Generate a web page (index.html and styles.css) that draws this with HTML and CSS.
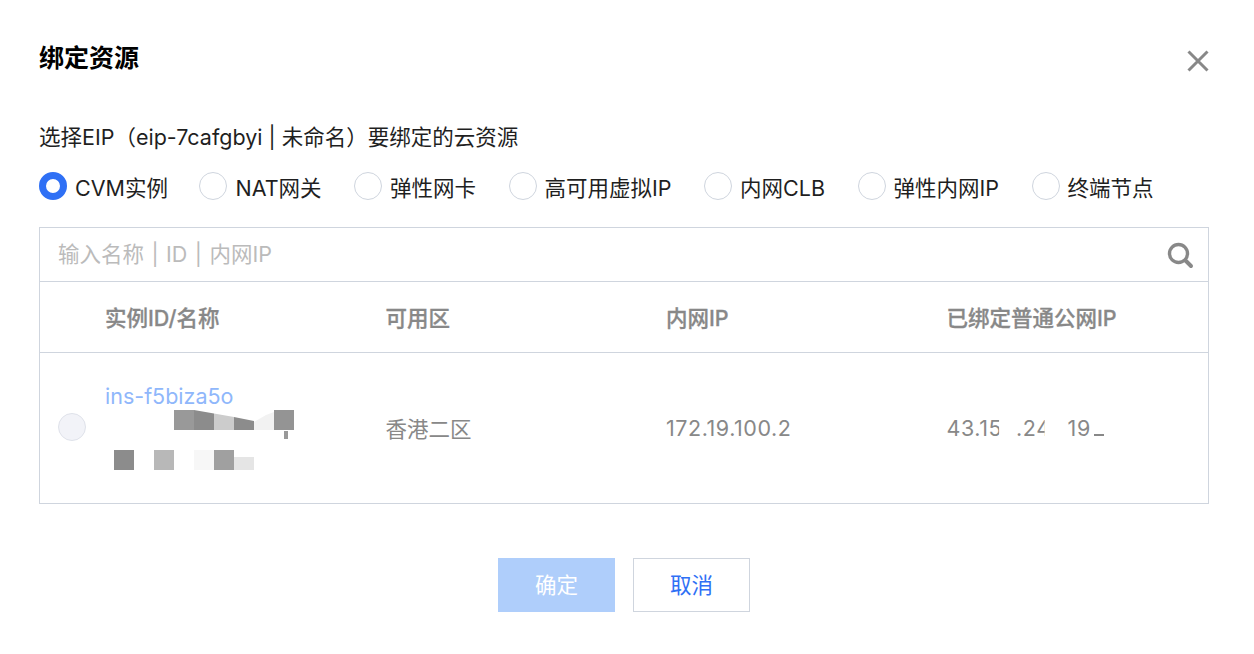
FILE: index.html
```html
<!DOCTYPE html>
<html lang="zh-CN">
<head>
    <meta charset="utf-8">
    <title>绑定资源</title>
    <link rel="stylesheet" href="styles.css">
</head>

<body>
    <div class="dialog">
        <header class="dialog-head">
            <h1>绑定资源</h1>
            <svg class="close" width="24" height="24" viewBox="0 0 24 24">
                <path d="M2.5 2.5 L21.5 21.5 M21.5 2.5 L2.5 21.5" stroke="#888" stroke-width="3" fill="none"/>
            </svg>
        </header>

        <p class="hint">选择EIP（eip-7cafgbyi | 未命名）要绑定的云资源</p>

        <div class="radios">
            <label class="radio"><i class="dot checked"></i>CVM实例</label>
            <label class="radio"><i class="dot"></i>NAT网关</label>
            <label class="radio"><i class="dot"></i>弹性网卡</label>
            <label class="radio"><i class="dot"></i>高可用虚拟IP</label>
            <label class="radio"><i class="dot"></i>内网CLB</label>
            <label class="radio"><i class="dot"></i>弹性内网IP</label>
            <label class="radio"><i class="dot"></i>终端节点</label>
        </div>

        <section class="picker">
            <div class="search">
                <span class="placeholder">输入名称 | ID | 内网IP</span>
                <svg width="28" height="28" viewBox="0 0 28 28">
                    <circle cx="12.5" cy="12.5" r="9" stroke="#888" stroke-width="3.4" fill="none"/>
                    <path d="M19.5 19.5 L25 25" stroke="#888" stroke-width="4" stroke-linecap="round"/>
                </svg>
            </div>

            <div class="row row-head">
                <div class="cell-check"></div>
                <div class="cell">实例ID/名称</div>
                <div class="cell">可用区</div>
                <div class="cell">内网IP</div>
                <div class="cell">已绑定普通公网IP</div>
            </div>

            <div class="row row-body">
                <div class="cell-check"><i class="dot disabled"></i></div>
                <div class="cell cell-name">
                    <a class="link">ins-f5biza5o</a>
                    <div class="tiles tiles-top">
                        <i class="tile t99"></i><i class="tile t8c slant-a"></i><i class="tile tcc slant-b"></i><i class="tile t8c slant-c"></i><i class="tile tf2 slant-d"></i><i class="tile t94"></i>
                    </div>
                    <div class="tiles tiles-bottom">
                        <i class="tile t8c"></i><i class="tile"></i><i class="tile tb8"></i><i class="tile"></i><i class="tile tf7"></i><i class="tile ta0"></i><i class="tile te5"></i>
                    </div>
                    <i class="speck"></i>
                </div>
                <div class="cell">香港二区</div>
                <div class="cell num">172.19.100.2</div>
                <div class="cell num"><span class="cut cut-a">43.15</span><span class="cut cut-b">.24</span>19<i class="dash"></i></div>
            </div>
        </section>

        <footer class="actions">
            <button class="btn btn-primary">确定</button>
            <button class="btn">取消</button>
        </footer>
    </div>
</body>
</html>
```

FILE: styles.css
```css
* {
    box-sizing: border-box;
}

body {
    margin: 0;
    background-color: #fff;
    color: #1f1f1f;
    font-family: "Inter", "Noto Sans CJK SC", sans-serif;
    font-size: 21.5px;
}

.dialog {
    width: 1248px;
    padding: 0 39px;
}

.dialog-head {
    display: flex;
    justify-content: space-between;
    padding-top: 40px;
}

h1 {
    margin: 0;
    font-size: 25px;
    line-height: 36px;
    font-weight: 700;
    color: #000;
}

.close {
    margin: 9px -1px 0 0;
}

.hint {
    margin: 45px 0 0;
    line-height: 32px;
}

.radios {
    display: flex;
    margin-top: 17px;
    height: 32px;
    align-items: center;
}

.radio {
    display: flex;
    align-items: center;
    gap: 8px;
    margin-right: 32.5px;
    white-space: nowrap;
}

.radio:first-child {
    margin-right: 31.5px;
}

.dot {
    display: block;
    width: 28px;
    height: 28px;
    border-radius: 50%;
    border: 1px solid #cfd5de;
    background-color: #fff;
}

.dot.checked {
    border: 7.5px solid #2f70f5;
}

.dot.disabled {
    background-color: #f2f3f8;
    border-color: #dfe2ea;
}

.picker {
    width: 1170px;
    margin-top: 25px;
    border: 1px solid #cfd5de;
}

.search {
    display: flex;
    justify-content: space-between;
    align-items: center;
    height: 54px;
    padding: 0 14px 0 18px;
    border-bottom: 1px solid #cfd5de;
}

.placeholder {
    padding-bottom: 4px;
    color: #bbb;
    word-spacing: 1.4px;
}

.row {
    display: grid;
    grid-template-columns: 65px repeat(4, 280.5px);
    align-items: center;
}

.row-head {
    height: 71px;
    padding-bottom: 2px;
    border-bottom: 1px solid #cfd5de;
    color: #888;
    font-weight: 500;
    -webkit-text-stroke: 0.3px #888;
}

.row-body {
    height: 150px;
    color: #888;
}

.row-body .cell {
    padding-bottom: 1px;
}

.cell-check {
    padding-left: 18px;
}

.row-body .cell-check {
    padding-bottom: 3px;
}

.row-body .cell-name {
    position: relative;
    height: 100%;
    padding: 27px 0 0;
}

.link {
    display: block;
    color: #8fb7fb;
    line-height: 32px;
}

.row-body .num {
    padding-bottom: 0;
    letter-spacing: 0.55px;
}

/* digits of the public ip are partly wiped out in the original */
.cut {
    display: inline-block;
}

.cut-a {
    margin-right: 14px;
    clip-path: inset(0 3px 0 0);
}

.cut-b {
    margin-right: 17px;
    clip-path: inset(0 6px 0 0);
}

.dash {
    display: inline-block;
    width: 10px;
    height: 2px;
    margin-left: 3px;
    background-color: #888;
}

/* blurred out name, drawn as grey squares */
.tiles {
    display: flex;
    height: 20px;
}

.tiles-top {
    margin: -2px 0 0 69px;
}

.tiles-bottom {
    margin: 20px 0 0 9px;
}

.tile {
    width: 20px;
    height: 20px;
}

.t8c { background-color: #8c8c8c; }
.t94 { background-color: #949494; }
.t99 { background-color: #999; }
.ta0 { background-color: #a0a0a0; }
.tb8 { background-color: #b8b8b8; }
.tcc { background-color: #ccc; }
.te5 { background-color: #e5e5e5; height: 13px; margin-top: 7px; }
.tf2 { background-color: #f2f2f2; }
.tf7 { background-color: #f7f7f7; }

.slant-a { clip-path: polygon(0 0, 100% 17%, 100% 100%, 0 100%); }
.slant-b { clip-path: polygon(0 17%, 100% 35%, 100% 100%, 0 100%); }
.slant-c { clip-path: polygon(0 35%, 100% 55%, 100% 100%, 0 100%); }
.slant-d { clip-path: polygon(0 60%, 60% 25%, 100% 10%, 100% 100%, 0 100%); }

.speck {
    position: absolute;
    left: 179px;
    top: 78px;
    width: 4px;
    height: 8px;
    background-color: #999;
}

.actions {
    display: flex;
    justify-content: center;
    gap: 18px;
    margin-top: 54px;
}

.btn {
    width: 117px;
    height: 54px;
    padding: 0 0 4px;
    border: 1px solid #cfd5de;
    background-color: #fff;
    color: #2f70f5;
    font-family: inherit;
    font-size: 21.5px;
}

.btn-primary {
    border: 0;
    background-color: #afcefb;
    color: #fff;
}
```
